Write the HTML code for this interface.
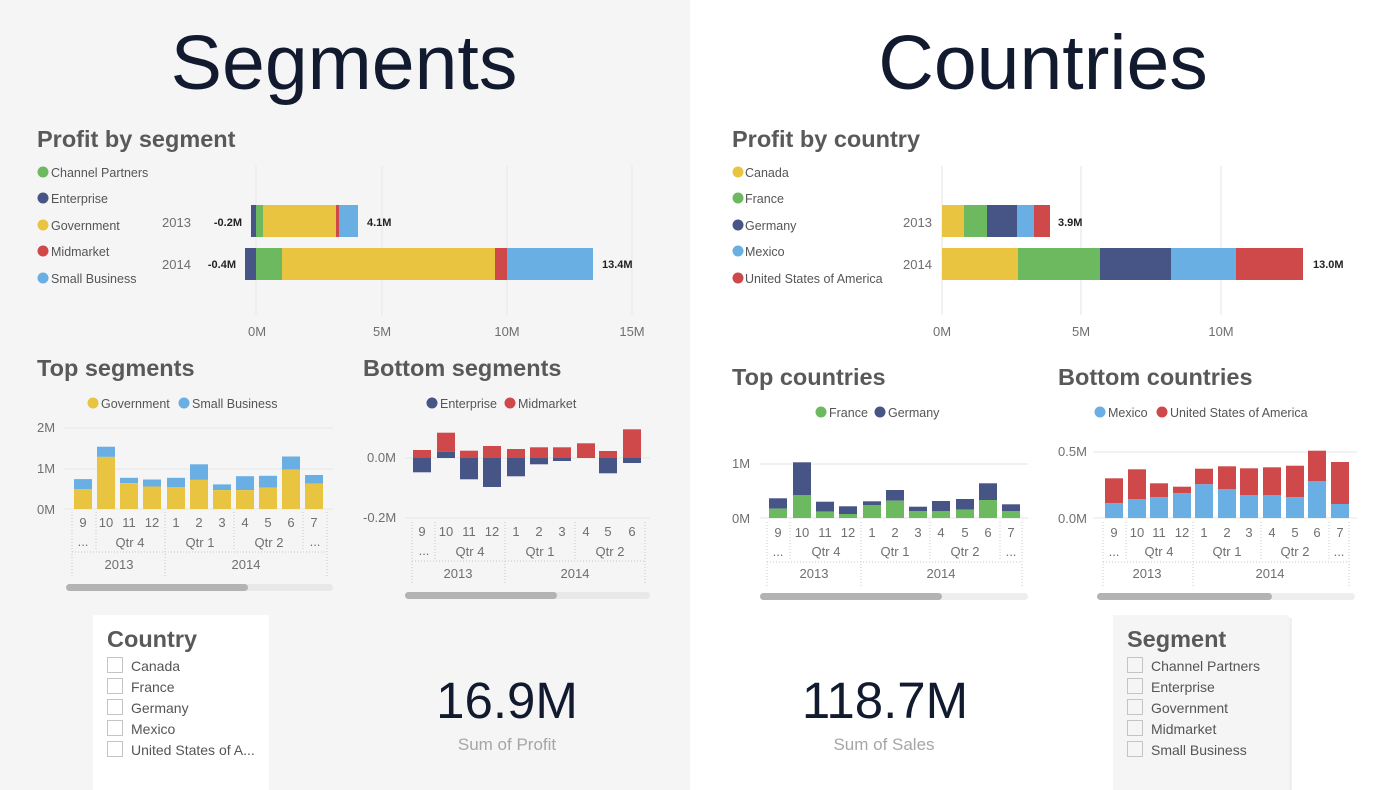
<!DOCTYPE html>
<html><head><meta charset="utf-8"><style>
html,body{margin:0;padding:0;width:1390px;height:790px;overflow:hidden;background:#fff}
svg{display:block;font-family:"Liberation Sans",sans-serif}
.ax{fill:#6f6f6f;font-size:13px}
.lg{fill:#555;font-size:12.5px}
.tt{fill:#595959;font-size:23.5px;font-weight:bold}
.dl{stroke:#c8c8c8;stroke-width:1;stroke-dasharray:1,2}
.gl{stroke:#e6e6e6;stroke-width:1}
.cb{fill:#fff;stroke:#c4c4c4;stroke-width:1}
.sl{fill:#555;font-size:14px}
</style></head><body>
<svg width="1390" height="790" viewBox="0 0 1390 790">
<rect x="0" y="0" width="690" height="790" fill="#f5f5f5"/>
<rect x="690" y="0" width="700" height="790" fill="#ffffff"/>

<text x="344" y="89" text-anchor="middle" font-size="77" fill="#111a2e">Segments</text>
<text x="1043" y="89" text-anchor="middle" font-size="77" fill="#111a2e">Countries</text>

<!-- Profit by segment -->
<text x="37" y="147" class="tt">Profit by segment</text>
<g class="lg">
<circle cx="43" cy="172" r="5.5" fill="#6DB960"/><text x="51" y="177">Channel Partners</text>
<circle cx="43" cy="198" r="5.5" fill="#475486"/><text x="51" y="203">Enterprise</text>
<circle cx="43" cy="225" r="5.5" fill="#E8C441"/><text x="51" y="230">Government</text>
<circle cx="43" cy="251" r="5.5" fill="#D0494A"/><text x="51" y="256">Midmarket</text>
<circle cx="43" cy="278" r="5.5" fill="#6AAFE3"/><text x="51" y="283">Small Business</text>
</g>
<g class="gl"><line x1="256" y1="166" x2="256" y2="315"/><line x1="382" y1="166" x2="382" y2="315"/><line x1="507" y1="166" x2="507" y2="315"/><line x1="632" y1="166" x2="632" y2="315"/></g>
<rect x="251" y="205" width="5" height="32" fill="#475486"/>
<rect x="256" y="205" width="7" height="32" fill="#6DB960"/>
<rect x="263" y="205" width="73" height="32" fill="#E8C441"/>
<rect x="336" y="205" width="3" height="32" fill="#D0494A"/>
<rect x="339" y="205" width="19" height="32" fill="#6AAFE3"/>
<rect x="245" y="248" width="11" height="32" fill="#475486"/>
<rect x="256" y="248" width="26" height="32" fill="#6DB960"/>
<rect x="282" y="248" width="213" height="32" fill="#E8C441"/>
<rect x="495" y="248" width="12" height="32" fill="#D0494A"/>
<rect x="507" y="248" width="86" height="32" fill="#6AAFE3"/>
<text x="162" y="227" class="ax" font-size="14">2013</text>
<text x="162" y="269" class="ax" font-size="14">2014</text>
<g font-size="11" font-weight="bold" fill="#222">
<text x="242" y="226" text-anchor="end">-0.2M</text><text x="367" y="226">4.1M</text>
<text x="236" y="268" text-anchor="end">-0.4M</text><text x="602" y="268">13.4M</text></g>
<g class="ax" text-anchor="middle"><text x="257" y="336">0M</text><text x="382" y="336">5M</text><text x="507" y="336">10M</text><text x="632" y="336">15M</text></g>

<!-- Profit by country -->
<text x="732" y="147" class="tt">Profit by country</text>
<g class="lg">
<circle cx="738" cy="172" r="5.5" fill="#E8C441"/><text x="745" y="177">Canada</text>
<circle cx="738" cy="198" r="5.5" fill="#6DB960"/><text x="745" y="203">France</text>
<circle cx="738" cy="225" r="5.5" fill="#475486"/><text x="745" y="230">Germany</text>
<circle cx="738" cy="251" r="5.5" fill="#6AAFE3"/><text x="745" y="256">Mexico</text>
<circle cx="738" cy="278" r="5.5" fill="#D0494A"/><text x="745" y="283">United States of America</text>
</g>
<g class="gl"><line x1="942" y1="166" x2="942" y2="315"/><line x1="1081" y1="166" x2="1081" y2="315"/><line x1="1221" y1="166" x2="1221" y2="315"/></g>
<rect x="942" y="205" width="22" height="32" fill="#E8C441"/>
<rect x="964" y="205" width="23" height="32" fill="#6DB960"/>
<rect x="987" y="205" width="30" height="32" fill="#475486"/>
<rect x="1017" y="205" width="17" height="32" fill="#6AAFE3"/>
<rect x="1034" y="205" width="16" height="32" fill="#D0494A"/>
<rect x="942" y="248" width="76" height="32" fill="#E8C441"/>
<rect x="1018" y="248" width="82" height="32" fill="#6DB960"/>
<rect x="1100" y="248" width="71" height="32" fill="#475486"/>
<rect x="1171" y="248" width="65" height="32" fill="#6AAFE3"/>
<rect x="1236" y="248" width="67" height="32" fill="#D0494A"/>
<text x="903" y="227" class="ax" font-size="14">2013</text>
<text x="903" y="269" class="ax" font-size="14">2014</text>
<g font-size="11" font-weight="bold" fill="#222"><text x="1058" y="226">3.9M</text><text x="1313" y="268">13.0M</text></g>
<g class="ax" text-anchor="middle"><text x="942" y="336">0M</text><text x="1081" y="336">5M</text><text x="1221" y="336">10M</text></g>

<!-- Top segments -->
<text x="37" y="376" class="tt">Top segments</text>
<g class="lg"><circle cx="93" cy="403" r="5.5" fill="#E8C441"/><text x="101" y="408">Government</text>
<circle cx="184" cy="403" r="5.5" fill="#6AAFE3"/><text x="192" y="408">Small Business</text></g>
<g class="gl"><line x1="64" y1="428" x2="333" y2="428"/><line x1="64" y1="469" x2="333" y2="469"/><line x1="64" y1="509" x2="333" y2="509"/></g>
<g class="ax"><text x="37" y="432">2M</text><text x="37" y="473">1M</text><text x="37" y="514">0M</text></g>
<g fill="#6AAFE3">
<rect x="74" y="479.1" width="18" height="10.2"/><rect x="97" y="446.7" width="18" height="10.2"/><rect x="120" y="477.8" width="18" height="5.4"/><rect x="143" y="479.5" width="18" height="7"/><rect x="167" y="477.8" width="18" height="9.5"/><rect x="190" y="464.3" width="18" height="15.6"/><rect x="213" y="484.4" width="18" height="5.7"/><rect x="236" y="476.2" width="18" height="13.9"/><rect x="259" y="475.8" width="18" height="11.9"/><rect x="282" y="456.5" width="18" height="13.1"/><rect x="305" y="475" width="18" height="8.6"/></g>
<g fill="#E8C441">
<rect x="74" y="489.3" width="18" height="19.7"/><rect x="97" y="456.9" width="18" height="52.1"/><rect x="120" y="483.2" width="18" height="25.8"/><rect x="143" y="486.5" width="18" height="22.5"/><rect x="167" y="487.3" width="18" height="21.7"/><rect x="190" y="479.9" width="18" height="29.1"/><rect x="213" y="490.1" width="18" height="18.9"/><rect x="236" y="490.1" width="18" height="18.9"/><rect x="259" y="487.7" width="18" height="21.3"/><rect x="282" y="469.6" width="18" height="39.4"/><rect x="305" y="483.6" width="18" height="25.4"/></g>
<g class="dl"><line x1="72" y1="512" x2="72" y2="578"/><line x1="96" y1="512" x2="96" y2="551"/><line x1="165" y1="512" x2="165" y2="578"/><line x1="234" y1="512" x2="234" y2="551"/><line x1="303" y1="512" x2="303" y2="551"/><line x1="327" y1="512" x2="327" y2="578"/><line x1="72" y1="552" x2="327" y2="552"/></g>
<g class="ax" text-anchor="middle"><text x="83" y="527">9</text><text x="106" y="527">10</text><text x="129" y="527">11</text><text x="152" y="527">12</text><text x="176" y="527">1</text><text x="199" y="527">2</text><text x="222" y="527">3</text><text x="245" y="527">4</text><text x="268" y="527">5</text><text x="291" y="527">6</text><text x="314" y="527">7</text>
<text x="83" y="546">...</text><text x="130" y="547">Qtr 4</text><text x="200" y="547">Qtr 1</text><text x="269" y="547">Qtr 2</text><text x="315" y="546">...</text>
<text x="119" y="569">2013</text><text x="246" y="569">2014</text></g>
<rect x="66" y="584" width="267" height="7" rx="3.5" fill="#e8e8e8"/><rect x="66" y="584" width="182" height="7" rx="3.5" fill="#b3b3b3"/>

<!-- Bottom segments -->
<text x="363" y="376" class="tt">Bottom segments</text>
<g class="lg"><circle cx="432" cy="403" r="5.5" fill="#475486"/><text x="440" y="408">Enterprise</text>
<circle cx="510" cy="403" r="5.5" fill="#D0494A"/><text x="518" y="408">Midmarket</text></g>
<g class="gl"><line x1="405" y1="458" x2="650" y2="458"/><line x1="405" y1="518" x2="650" y2="518"/></g>
<g class="ax"><text x="367" y="462">0.0M</text><text x="363" y="522">-0.2M</text></g>
<g fill="#D0494A"><rect x="413" y="450" width="18" height="8"/><rect x="437" y="432.7" width="18" height="19"/><rect x="460" y="450.7" width="18" height="7.3"/><rect x="483" y="446" width="18" height="12"/><rect x="507" y="449" width="18" height="9"/><rect x="530" y="447.3" width="18" height="10.7"/><rect x="553" y="447.3" width="18" height="10.7"/><rect x="577" y="443.3" width="18" height="14.7"/><rect x="599" y="451" width="18" height="7"/><rect x="623" y="429.3" width="18" height="28.7"/></g>
<g fill="#475486"><rect x="413" y="458" width="18" height="14.3"/><rect x="437" y="451.7" width="18" height="6.3"/><rect x="460" y="458" width="18" height="21.3"/><rect x="483" y="458" width="18" height="29"/><rect x="507" y="458" width="18" height="18.3"/><rect x="530" y="458" width="18" height="6.3"/><rect x="553" y="458" width="18" height="3"/><rect x="599" y="458" width="18" height="15.3"/><rect x="623" y="458" width="18" height="5"/></g>
<g class="dl"><line x1="412" y1="522" x2="412" y2="584"/><line x1="435" y1="522" x2="435" y2="560"/><line x1="505" y1="522" x2="505" y2="584"/><line x1="575" y1="522" x2="575" y2="560"/><line x1="645" y1="522" x2="645" y2="584"/><line x1="412" y1="561" x2="645" y2="561"/></g>
<g class="ax" text-anchor="middle"><text x="422" y="536">9</text><text x="446" y="536">10</text><text x="469" y="536">11</text><text x="492" y="536">12</text><text x="516" y="536">1</text><text x="539" y="536">2</text><text x="562" y="536">3</text><text x="586" y="536">4</text><text x="608" y="536">5</text><text x="632" y="536">6</text>
<text x="424" y="555">...</text><text x="470" y="556">Qtr 4</text><text x="540" y="556">Qtr 1</text><text x="610" y="556">Qtr 2</text>
<text x="458" y="578">2013</text><text x="575" y="578">2014</text></g>
<rect x="405" y="592" width="245" height="7" rx="3.5" fill="#e8e8e8"/><rect x="405" y="592" width="152" height="7" rx="3.5" fill="#b3b3b3"/>

<!-- Top countries -->
<text x="732" y="385" class="tt">Top countries</text>
<g class="lg"><circle cx="821" cy="412" r="5.5" fill="#6DB960"/><text x="829" y="417">France</text>
<circle cx="880" cy="412" r="5.5" fill="#475486"/><text x="888" y="417">Germany</text></g>
<g class="gl"><line x1="760" y1="464" x2="1028" y2="464"/><line x1="760" y1="518" x2="1028" y2="518"/></g>
<g class="ax"><text x="732" y="468">1M</text><text x="732" y="523">0M</text></g>
<g fill="#475486"><rect x="769" y="498.3" width="18" height="10.4"/><rect x="793" y="462.3" width="18" height="32.7"/><rect x="816" y="501.7" width="18" height="10"/><rect x="839" y="506.3" width="18" height="7.7"/><rect x="863" y="501.3" width="18" height="3.7"/><rect x="886" y="490" width="18" height="10.7"/><rect x="909" y="506.7" width="18" height="4.6"/><rect x="932" y="501" width="18" height="10"/><rect x="956" y="499" width="18" height="10.7"/><rect x="979" y="483.3" width="18" height="16.7"/><rect x="1002" y="504.3" width="18" height="6.7"/></g>
<g fill="#6DB960"><rect x="769" y="508.7" width="18" height="9.3"/><rect x="793" y="495" width="18" height="23"/><rect x="816" y="511.7" width="18" height="6.3"/><rect x="839" y="514" width="18" height="4"/><rect x="863" y="505" width="18" height="13"/><rect x="886" y="500.7" width="18" height="17.3"/><rect x="909" y="511.3" width="18" height="6.7"/><rect x="932" y="511" width="18" height="7"/><rect x="956" y="509.7" width="18" height="8.3"/><rect x="979" y="500" width="18" height="18"/><rect x="1002" y="511" width="18" height="7"/></g>
<g class="dl"><line x1="767" y1="522" x2="767" y2="586"/><line x1="790" y1="522" x2="790" y2="561"/><line x1="861" y1="522" x2="861" y2="586"/><line x1="930" y1="522" x2="930" y2="561"/><line x1="1000" y1="522" x2="1000" y2="561"/><line x1="1022" y1="522" x2="1022" y2="586"/><line x1="767" y1="562" x2="1022" y2="562"/></g>
<g class="ax" text-anchor="middle"><text x="778" y="537">9</text><text x="802" y="537">10</text><text x="825" y="537">11</text><text x="848" y="537">12</text><text x="872" y="537">1</text><text x="895" y="537">2</text><text x="918" y="537">3</text><text x="941" y="537">4</text><text x="965" y="537">5</text><text x="988" y="537">6</text><text x="1011" y="537">7</text>
<text x="778" y="556">...</text><text x="826" y="556">Qtr 4</text><text x="895" y="556">Qtr 1</text><text x="965" y="556">Qtr 2</text><text x="1011" y="556">...</text>
<text x="814" y="578">2013</text><text x="941" y="578">2014</text></g>
<rect x="760" y="593" width="268" height="7" rx="3.5" fill="#eeeeee"/><rect x="760" y="593" width="182" height="7" rx="3.5" fill="#b3b3b3"/>

<!-- Bottom countries -->
<text x="1058" y="385" class="tt">Bottom countries</text>
<g class="lg"><circle cx="1100" cy="412" r="5.5" fill="#6AAFE3"/><text x="1108" y="417">Mexico</text>
<circle cx="1162" cy="412" r="5.5" fill="#D0494A"/><text x="1170" y="417">United States of America</text></g>
<g class="gl"><line x1="1093" y1="452" x2="1357" y2="452"/><line x1="1093" y1="518" x2="1357" y2="518"/></g>
<g class="ax"><text x="1058" y="456">0.5M</text><text x="1058" y="523">0.0M</text></g>
<g fill="#D0494A"><rect x="1105" y="478.3" width="18" height="25"/><rect x="1128" y="469.3" width="18" height="29.7"/><rect x="1150" y="483.3" width="18" height="14"/><rect x="1173" y="486.7" width="18" height="6.6"/><rect x="1195" y="468.7" width="18" height="15.6"/><rect x="1218" y="466.3" width="18" height="22.7"/><rect x="1240" y="468.3" width="18" height="26.7"/><rect x="1263" y="467.3" width="18" height="27.7"/><rect x="1286" y="465.7" width="18" height="31.6"/><rect x="1308" y="450.7" width="18" height="30.3"/><rect x="1331" y="462" width="18" height="42"/></g>
<g fill="#6AAFE3"><rect x="1105" y="503.3" width="18" height="14.7"/><rect x="1128" y="499" width="18" height="19"/><rect x="1150" y="497.3" width="18" height="20.7"/><rect x="1173" y="493.3" width="18" height="24.7"/><rect x="1195" y="484.3" width="18" height="33.7"/><rect x="1218" y="489" width="18" height="29"/><rect x="1240" y="495" width="18" height="23"/><rect x="1263" y="495" width="18" height="23"/><rect x="1286" y="497.3" width="18" height="20.7"/><rect x="1308" y="481" width="18" height="37"/><rect x="1331" y="504" width="18" height="14"/></g>
<g class="dl"><line x1="1103" y1="522" x2="1103" y2="586"/><line x1="1126" y1="522" x2="1126" y2="561"/><line x1="1193" y1="522" x2="1193" y2="586"/><line x1="1261" y1="522" x2="1261" y2="561"/><line x1="1329" y1="522" x2="1329" y2="561"/><line x1="1349" y1="522" x2="1349" y2="586"/><line x1="1103" y1="562" x2="1349" y2="562"/></g>
<g class="ax" text-anchor="middle"><text x="1114" y="537">9</text><text x="1137" y="537">10</text><text x="1159" y="537">11</text><text x="1182" y="537">12</text><text x="1204" y="537">1</text><text x="1227" y="537">2</text><text x="1249" y="537">3</text><text x="1272" y="537">4</text><text x="1295" y="537">5</text><text x="1317" y="537">6</text><text x="1340" y="537">7</text>
<text x="1114" y="556">...</text><text x="1159" y="556">Qtr 4</text><text x="1227" y="556">Qtr 1</text><text x="1295" y="556">Qtr 2</text><text x="1339" y="556">...</text>
<text x="1147" y="578">2013</text><text x="1270" y="578">2014</text></g>
<rect x="1097" y="593" width="258" height="7" rx="3.5" fill="#eeeeee"/><rect x="1097" y="593" width="175" height="7" rx="3.5" fill="#b3b3b3"/>

<!-- Country slicer -->
<rect x="93" y="615" width="176" height="180" fill="#ffffff"/>
<text x="107" y="647" class="tt" font-size="24">Country</text>
<g class="sl">
<rect x="107.5" y="657.5" width="15" height="15" class="cb"/><text x="131" y="671">Canada</text>
<rect x="107.5" y="678.5" width="15" height="15" class="cb"/><text x="131" y="692">France</text>
<rect x="107.5" y="699.5" width="15" height="15" class="cb"/><text x="131" y="713">Germany</text>
<rect x="107.5" y="720.5" width="15" height="15" class="cb"/><text x="131" y="734">Mexico</text>
<rect x="107.5" y="741.5" width="15" height="15" class="cb"/><text x="131" y="755">United States of A...</text>
</g>

<!-- KPIs -->
<text x="507" y="718" text-anchor="middle" font-size="51" fill="#111a2e">16.9M</text>
<text x="507" y="750" text-anchor="middle" font-size="17" fill="#a6a6a6">Sum of Profit</text>
<text x="885" y="718" text-anchor="middle" font-size="51" fill="#111a2e">118.7M</text>
<text x="884" y="750" text-anchor="middle" font-size="17" fill="#a6a6a6">Sum of Sales</text>

<!-- Segment slicer -->
<rect x="1116" y="618" width="176" height="180" fill="#e6e6e6" opacity="0.6"/>
<rect x="1113" y="615" width="176" height="180" fill="#f5f5f5"/>
<text x="1127" y="647" class="tt" font-size="24">Segment</text>
<g class="sl">
<rect x="1127.5" y="657.5" width="15" height="15" class="cb" style="fill:#f5f5f5"/><text x="1151" y="671">Channel Partners</text>
<rect x="1127.5" y="678.5" width="15" height="15" class="cb" style="fill:#f5f5f5"/><text x="1151" y="692">Enterprise</text>
<rect x="1127.5" y="699.5" width="15" height="15" class="cb" style="fill:#f5f5f5"/><text x="1151" y="713">Government</text>
<rect x="1127.5" y="720.5" width="15" height="15" class="cb" style="fill:#f5f5f5"/><text x="1151" y="734">Midmarket</text>
<rect x="1127.5" y="741.5" width="15" height="15" class="cb" style="fill:#f5f5f5"/><text x="1151" y="755">Small Business</text>
</g>
</svg>
</body></html>
